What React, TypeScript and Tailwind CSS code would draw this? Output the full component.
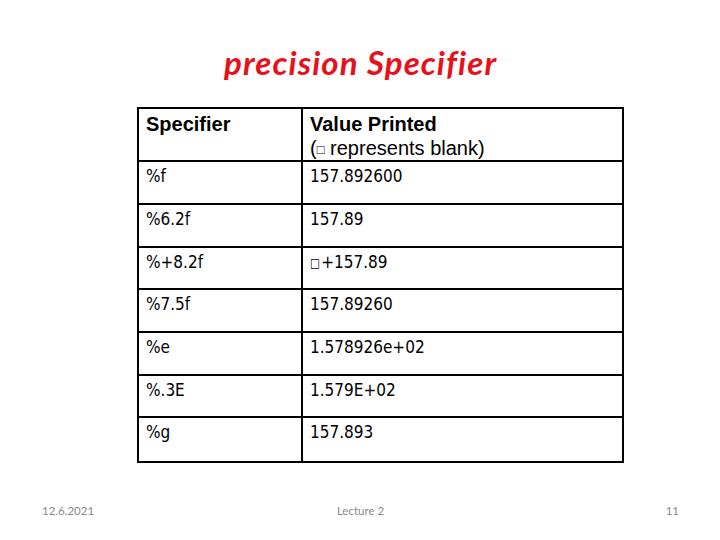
import React from 'react';

const rows: [string, React.ReactNode][] = [
  ['%f', '157.892600'],
  ['%6.2f', '157.89'],
  ['%+8.2f', (<><span className="text-[12px] align-[1px] mr-[1px]">□</span>+157.89</>)],
  ['%7.5f', '157.89260'],
  ['%e', '1.578926e+02'],
  ['%.3E', '1.579E+02'],
  ['%g', '157.893'],
];

// row heights measured from the slide, in px
const heights = ['h-[43px]', 'h-[43px]', 'h-[42px]', 'h-[43px]', 'h-[43px]', 'h-[42px]', 'h-[43px]'];

export default function App() {
  return (
    <div className="relative w-[720px] h-[540px] bg-white overflow-hidden">
      {/* Title */}
      <div className="pt-[42px] pl-[224px] h-[107px]">
        <h1 className="text-[#e8101a] italic font-bold text-[33px] leading-[40px] font-['Lato','Open_Sans',sans-serif] tracking-[1.1px]">
          precision Specifier
        </h1>
      </div>

      {/* Table */}
      <div className="ml-[137px] w-[487px] border-2 border-black font-['DejaVu_Sans',Tahoma,sans-serif] font-stretch-condensed text-[17px] leading-[20px]">
        <div className="flex h-[53px] border-b-2 border-black font-['Liberation_Sans',Arial,sans-serif] font-stretch-normal text-[20px] leading-[24px]">
          <div className="w-[164px] border-r-2 border-black pl-[7px] pt-[3px] font-bold">Specifier</div>
          <div className="flex-1 pl-[7px] pt-[3px]">
            <div className="font-bold">Value Printed</div>
            <div>
              (<span className="text-[13px] align-[1px]">□</span> represents blank)
            </div>
          </div>
        </div>
        {rows.map(([spec, value], i) => (
          <div
            key={spec}
            className={`flex ${heights[i]} ${i < rows.length - 1 ? 'border-b-2 border-black' : ''}`}
          >
            <div className="w-[164px] border-r-2 border-black pl-[7px] pt-[4px]">{spec}</div>
            <div className="flex-1 pl-[7px] pt-[4px]">{value}</div>
          </div>
        ))}
      </div>

      {/* Footer */}
      <div className="absolute left-[42px] right-[41px] top-[503px] grid grid-cols-3 text-[11.5px] leading-[16px] text-[#8a8a8a] font-['Lato',sans-serif]">
        <span>12.6.2021</span>
        <span className="text-center">Lecture 2</span>
        <span className="text-right">11</span>
      </div>
    </div>
  );
}
